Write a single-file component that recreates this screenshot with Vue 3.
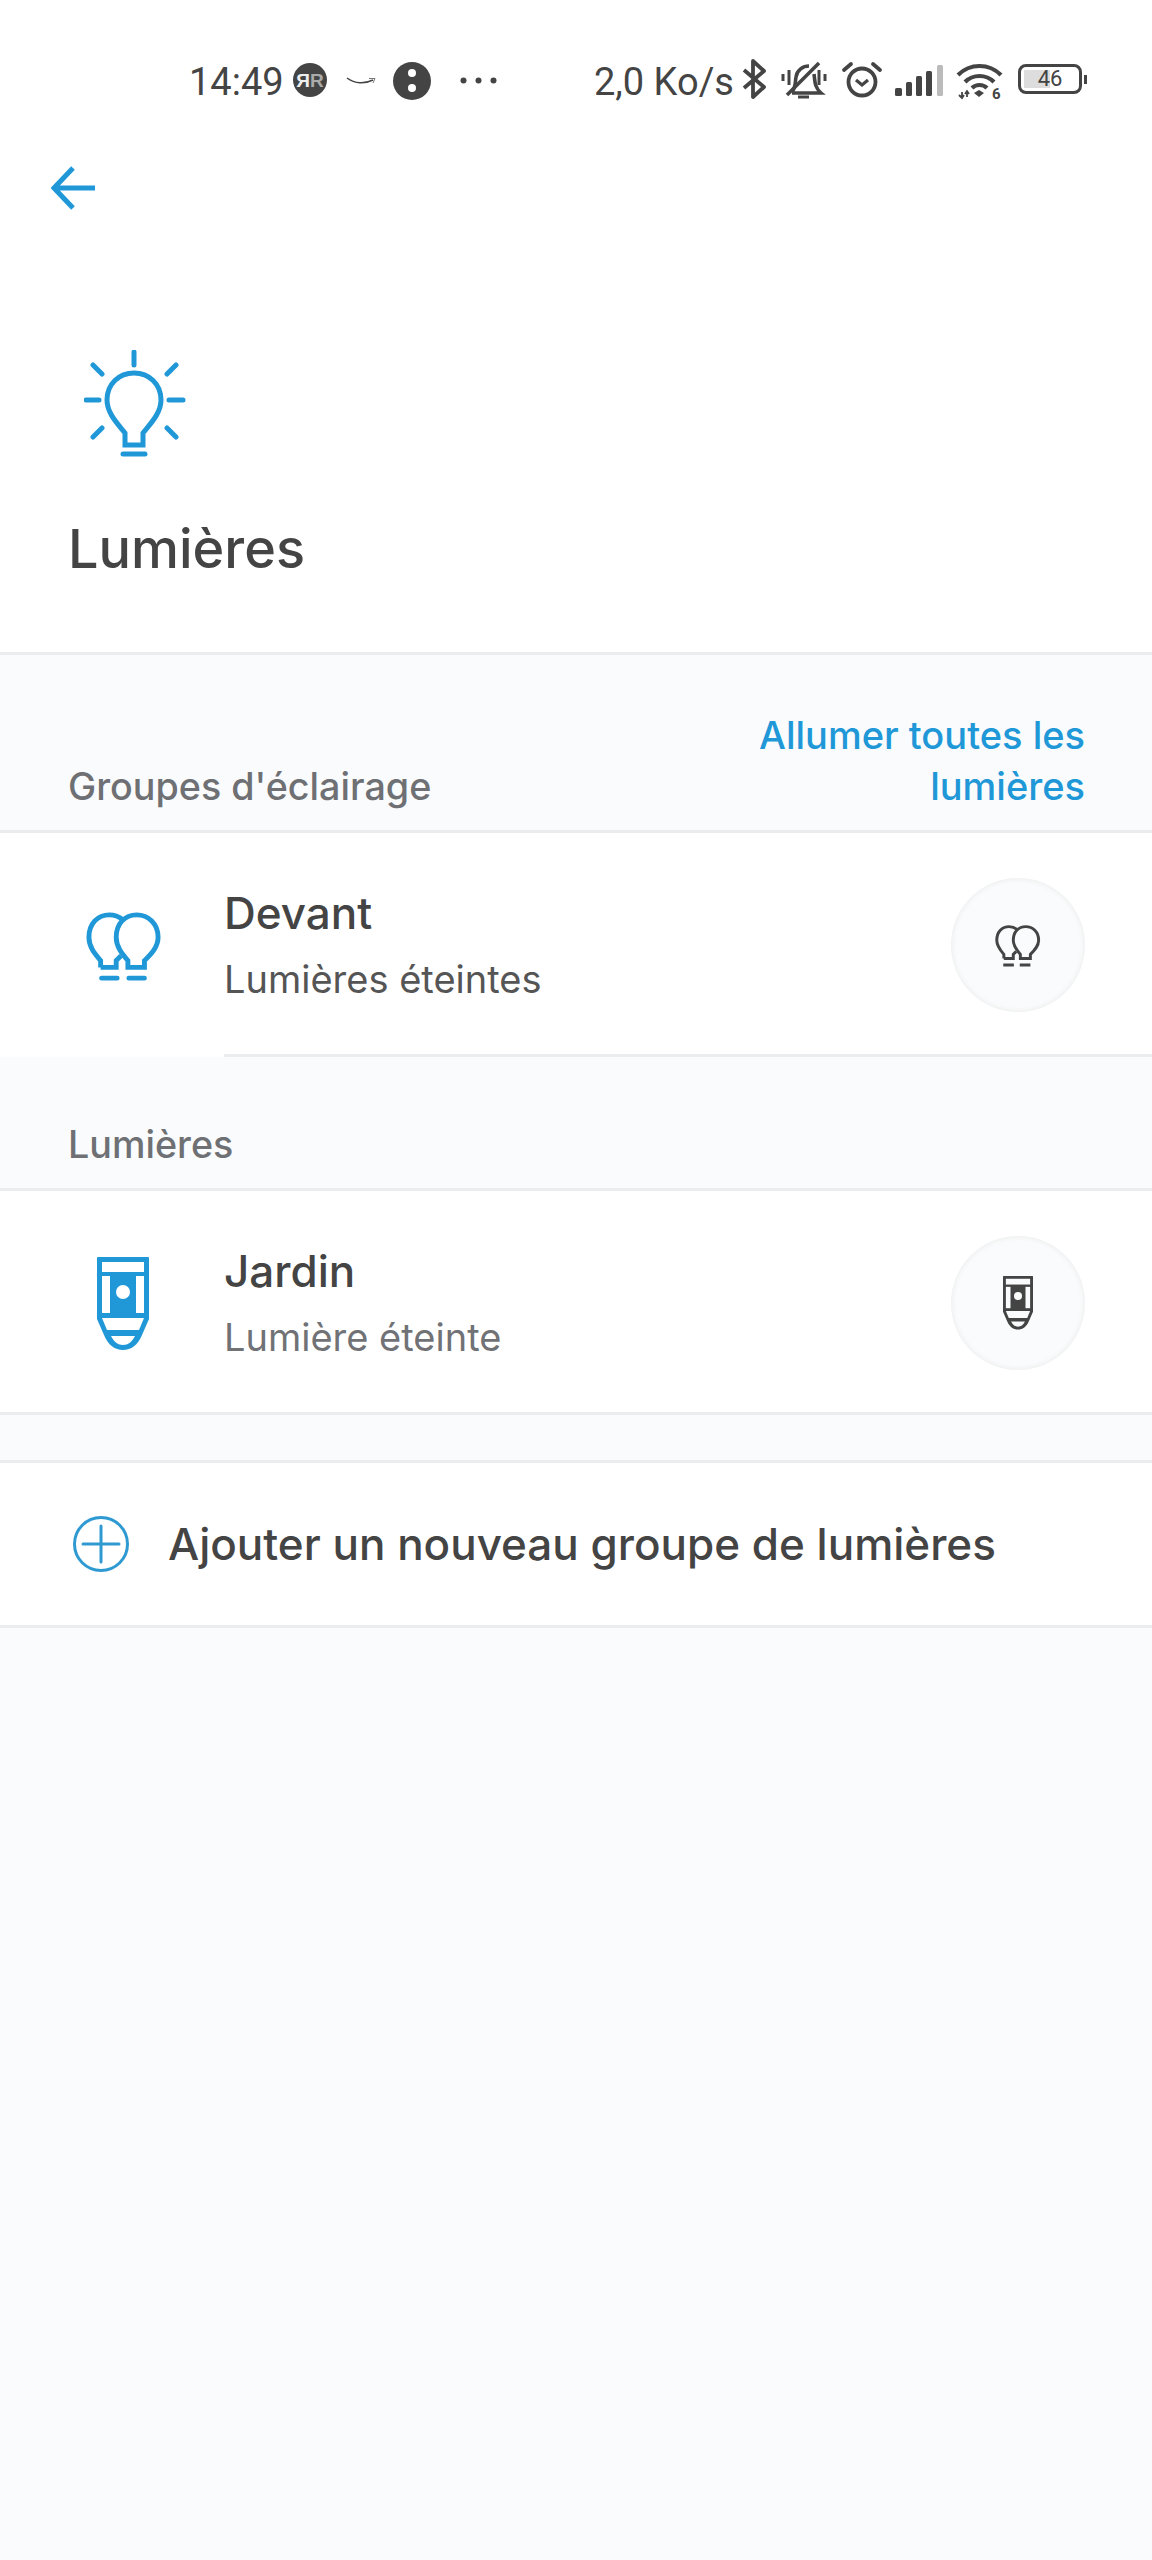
<script setup>
</script>

<template>
  <div class="page">
    <div class="status">
      <span class="time">14:49</span>
      <svg class="s-rr" viewBox="0 0 34 34"><circle cx="17" cy="17" r="17" fill="#444"/><text x="17" y="23.500" text-anchor="end" class="rr" fill="#eee">Я</text><text x="17" y="23.500" class="rr" fill="#aaa">R</text></svg>
      <svg class="s-amz" viewBox="0 0 28 8"><path d="M0 1 C8 7 18 7 26 3" fill="none" stroke="#444" stroke-width="1.400"/><path d="M22 1.500 L28 1.500 L26 6" fill="none" stroke="#777" stroke-width="1"/></svg>
      <svg class="s-dot" viewBox="0 0 38 38"><circle cx="19" cy="19" r="19" fill="#444"/><circle cx="19" cy="11" r="4" fill="#fff"/><circle cx="19" cy="26" r="4" fill="#fff"/></svg>
      <svg class="s-more" viewBox="0 0 37 7"><circle cx="3.500" cy="3.500" r="3" fill="#444"/><circle cx="18.500" cy="3.500" r="3" fill="#444"/><circle cx="33.500" cy="3.500" r="3" fill="#444"/></svg>
      <span class="speed">2,0 Ko/s</span>
      <svg class="s-bt" viewBox="0 0 24 38"><path d="M2 10 L22 27 L11 37 V1 L22 11 L2 28" fill="none" stroke="#444" stroke-width="3.800" stroke-linejoin="round"/></svg>
      <svg class="s-bell" viewBox="0 0 46 36"><path d="M11 30 C15 25 14 20 15 15 C16 8 22 4 28 4" fill="none" stroke="#444" stroke-width="3.600"/><path d="M33 12 C34 18 33 25 40 31 H11" fill="none" stroke="#444" stroke-width="3.600"/><path d="M6 33 L38 1" stroke="#444" stroke-width="3.600"/><path d="M2 12 V19 M8 8 V23 M38 8 V23 M44 12 V19 M17 35 H28" stroke="#444" stroke-width="3" fill="none"/></svg>
      <svg class="s-alarm" viewBox="0 0 40 36"><circle cx="20" cy="21" r="13.500" fill="none" stroke="#444" stroke-width="3.800"/><path d="M14 19 L20 24 L26 19" fill="none" stroke="#444" stroke-width="3.200"/><path d="M2 9 L9 3 M31 3 L38 9" stroke="#444" stroke-width="3.800" stroke-linecap="round"/></svg>
      <svg class="s-sig" viewBox="0 0 48 31"><rect x="0" y="23" width="7" height="8" rx="1.500" fill="#444"/><rect x="11" y="17" width="6" height="14" rx="1.500" fill="#444"/><rect x="21" y="11" width="6" height="20" rx="1.500" fill="#444"/><rect x="31" y="6" width="6" height="25" rx="1.500" fill="#444"/><rect x="42" y="0" width="6" height="31" rx="1.500" fill="#bbb"/></svg>
      <svg class="s-wifi" viewBox="0 0 47 36"><path d="M2 12 C14 0 33 0 45 12 M9 19 C17 11 30 11 38 19 M16 25 C20 21 27 21 31 25" fill="none" stroke="#444" stroke-width="4.200"/><path d="M18 30 L23 27 L28 30 L23 34 Z" fill="#444"/><path d="M6 29 V35 M11 28 V34 M3 32 L6 35 L8 32 M9 31 L11 28 L13 31" stroke="#444" stroke-width="1.800" fill="none"/><text x="36" y="36" class="six">6</text></svg>
      <div class="batt"><div class="fill"></div><span>46</span></div>
      <div class="nub"></div>
    </div>

    <div class="top">
      <svg class="back" viewBox="0 0 44 44"><path d="M44 22 H3 M22 2 L3 22 L22 42" fill="none" stroke="#2098d8" stroke-width="5"/></svg>
      <svg class="hero" viewBox="0 0 102 107"><path d="M41 95 V83 C33 73 23 63 23 50 C23 34 35 23 50 23 C65 23 77 34 77 50 C77 63 67 73 59 83 V95 Z M39 104 H61 M50 2 V15 M9 15 L18 24 M92 15 L83 24 M2 50 H15 M85 50 H99 M9 87 L18 78 M92 87 L83 78" fill="none" stroke="#2098d8" stroke-width="5" stroke-linecap="round"/></svg>
      <h1>Lumières</h1>
    </div>

    <div class="band head-band">
      <span class="label">Groupes d'éclairage</span>
      <span class="action">Allumer toutes les<br>lumières</span>
    </div>

    <div class="row first">
      <svg class="icon-bulbs" viewBox="0 0 78 72"><path d="M15 58 V51 C9 44 3 37 3 27 C3 13 12 4 24 4 C30 4 34 6 38 9" fill="none" stroke="#2098d8" stroke-width="5"/><path d="M15 58 H31 V51 L36 46" fill="none" stroke="#2098d8" stroke-width="5"/><path d="M43 58 V51 C37 44 31 37 31 27 C31 13 40 4 52 4 C64 4 74 13 74 27 C74 37 67 44 60 51 V58 Z" fill="none" stroke="#2098d8" stroke-width="5"/><path d="M16 69 H32 M44 69 H60" stroke="#2098d8" stroke-width="5" stroke-linecap="round"/></svg>
      <div class="text">
        <div class="name">Devant</div>
        <div class="sub dark">Lumières éteintes</div>
      </div>
      <div class="toggle">
        <svg class="t-bulbs" viewBox="0 0 78 72"><path d="M15 58 V51 C9 44 3 37 3 27 C3 13 12 4 24 4 C30 4 34 6 38 9" fill="none" stroke="#444" stroke-width="5"/><path d="M15 58 H31 V51 L36 46" fill="none" stroke="#444" stroke-width="5"/><path d="M43 58 V51 C37 44 31 37 31 27 C31 13 40 4 52 4 C64 4 74 13 74 27 C74 37 67 44 60 51 V58 Z" fill="none" stroke="#444" stroke-width="5"/><path d="M14 69 H32 M42 69 H60" stroke="#444" stroke-width="5"/></svg>
      </div>
    </div>

    <div class="band low-band">
      <span class="label">Lumières</span>
    </div>

    <div class="row second">
      <svg class="icon-lamp" viewBox="0 0 52 94"><path d="M0 1 Q0 0 1 0 H51 Q52 0 52 1 V62 L45 78 C41 88 34 93 26 93 C18 93 11 88 7 78 L0 62 Z" fill="#2098d8"/><rect x="5" y="5" width="42" height="10" fill="#fff"/><rect x="5" y="19" width="8" height="37" fill="#fff"/><rect x="39" y="19" width="8" height="37" fill="#fff"/><circle cx="26" cy="35" r="7" fill="#fff"/><path d="M5 61 H47 L42 73 H10 Z" fill="#fff"/><path d="M14 79 H38 C35 85 31 88 26 88 C21 88 17 85 14 79 Z" fill="#fff"/></svg>
      <div class="text">
        <div class="name">Jardin</div>
        <div class="sub">Lumière éteinte</div>
      </div>
      <div class="toggle">
        <svg class="t-lamp" viewBox="0 0 52 94"><path d="M0 1 Q0 0 1 0 H51 Q52 0 52 1 V62 L45 78 C41 88 34 93 26 93 C18 93 11 88 7 78 L0 62 Z" fill="#444"/><rect x="5" y="5" width="42" height="10" fill="#fafbfc"/><rect x="5" y="19" width="8" height="37" fill="#fafbfc"/><rect x="39" y="19" width="8" height="37" fill="#fafbfc"/><circle cx="26" cy="35" r="7" fill="#fafbfc"/><path d="M5 61 H47 L42 73 H10 Z" fill="#fafbfc"/><path d="M14 79 H38 C35 85 31 88 26 88 C21 88 17 85 14 79 Z" fill="#fafbfc"/></svg>
      </div>
    </div>

    <div class="add">
      <svg class="plus" viewBox="0 0 56 56"><circle cx="28" cy="28" r="26.500" fill="none" stroke="#2f9ad2" stroke-width="3"/><path d="M28 10 V46 M10 28 H46" stroke="#2f9ad2" stroke-width="3" stroke-linecap="round"/></svg>
      <span>Ajouter un nouveau groupe de lumières</span>
    </div>
  </div>
</template>

<style scoped>
.page {
  width: 1152px;
  height: 2560px;
  background: #fafbfd;
  font-family: Inter, "Noto Sans", sans-serif;
  color: #444;
  overflow: hidden;
}
.status {
  height: 80px;
  padding: 60px 0 0 189px;
  box-sizing: border-box;
  background: #fff;
  display: flex;
  align-items: flex-start;
  font-family: Roboto, sans-serif;
  font-size: 38px;
  line-height: 44px;
  color: #444;
  position: relative;
}
.status svg, .status .batt, .status .nub { flex: none; overflow: visible; }
.time { width: 95px; white-space: nowrap; }
.rr { font: 700 19px "Liberation Sans", sans-serif; }
.s-rr { width: 34px; height: 34px; margin: 3px 0 0 9px; }
.s-amz { width: 28px; height: 8px; margin: 17px 0 0 20px; }
.s-dot { width: 38px; height: 38px; margin: 2px 0 0 18px; }
.s-more { width: 37px; height: 7px; margin: 17px 0 0 29px; }
.speed { margin-left: 97px; width: 148px; white-space: nowrap; }
.s-bt { width: 24px; height: 38px; margin: 0 0 0 0; }
.s-bell { width: 46px; height: 36px; margin: 2px 0 0 15px; }
.s-alarm { width: 40px; height: 36px; margin: 1px 0 0 15px; }
.s-sig { width: 48px; height: 31px; margin: 5px 0 0 13px; }
.s-wifi { width: 47px; height: 36px; margin: 3px 0 0 13px; }
.six { font: 700 15px Roboto, sans-serif; fill: #444; }
.batt {
  position: relative;
  width: 64px;
  height: 30px;
  margin: 4px 0 0 15px;
  box-sizing: border-box;
  border: 3px solid #444;
  border-radius: 8px;
  font-size: 22px;
  line-height: 24px;
  text-align: center;
}
.fill { position: absolute; left: 3px; top: 3px; bottom: 3px; width: 26px; background: #ddd; }
.batt span { position: relative; }
.nub { width: 3px; height: 9px; margin: 15px 0 0 2px; background: #444; }

.top {
  height: 575px;
  box-sizing: border-box;
  background: #fff;
  border-bottom: 3px solid #ebecee;
  padding: 86px 0 0 0;
  display: flex;
  flex-direction: column;
  align-items: flex-start;
}
.back { width: 44px; height: 44px; margin-left: 51px; }
.hero { width: 102px; height: 107px; margin: 140px 0 0 84px; }
h1 {
  margin: 60px 0 0 68px;
  font-size: 54px;
  line-height: 64px;
  font-weight: 500;
}
.band { box-sizing: border-box; display: flex; justify-content: space-between; align-items: flex-end; border-bottom: 3px solid #ebecee; padding: 0 67px 22px 68px; }
.head-band { height: 178px; }
.low-band { height: 134px; }
.label { font-size: 37.700px; line-height: 44px; color: #6e7074; font-weight: 500; }
.action { font-size: 38px; line-height: 51px; color: #2098d8; text-align: right; font-weight: 500; margin-bottom: -4px; }
.row { height: 224px; background: #fff; box-sizing: border-box; display: flex; align-items: center; position: relative; border-bottom: 3px solid #ebecee; padding-right: 67px; }
.first { border-bottom: 0; }
.first::after { content: ""; position: absolute; left: 224px; right: 0; bottom: 0; height: 3px; background: #ebecee; }
.icon-bulbs { width: 76px; height: 72px; margin: 2px 62px 0 86px; flex: none; }
.icon-lamp { width: 52px; height: 94px; margin: 5px 75px 0 97px; flex: none; }
.text { flex: 1; display: flex; flex-direction: column; justify-content: center; }
.second .text { margin-top: 3px; }
.name { font-size: 44px; line-height: 50px; font-weight: 500; color: #444; }
.sub { font-size: 38px; line-height: 46px; margin-top: 18px; color: #707276; }
.sub.dark { color: #555; }
.toggle {
  width: 134px; height: 134px; border-radius: 50%; flex: none;
  background: #fafbfc; box-shadow: inset 0 0 5px 1px #eceded; display: flex; align-items: center; justify-content: center;
}
.second .toggle { margin-top: 2px; }
.t-bulbs { width: 46px; height: 43px; }
.t-lamp { width: 30px; height: 56px; }
.add {
  margin-top: 45px; height: 168px; box-sizing: border-box; background: #fff;
  border-top: 3px solid #ebecee; border-bottom: 3px solid #ebecee;
  display: flex; align-items: center; padding-left: 73px;
  font-size: 44px; font-weight: 500; color: #444;
}
.plus { width: 56px; height: 56px; margin-right: 39px; flex: none; }
</style>
